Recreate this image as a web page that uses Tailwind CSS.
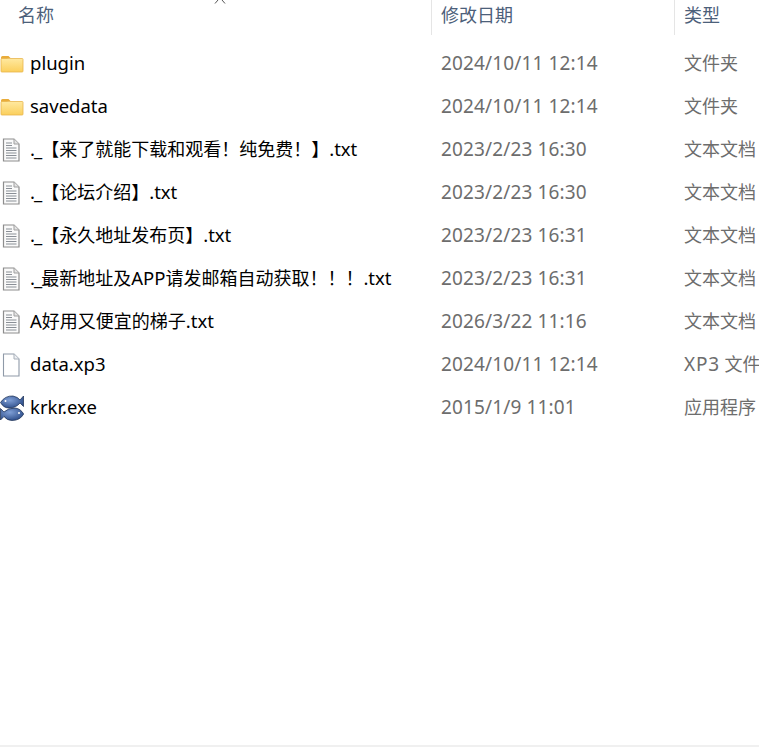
<!DOCTYPE html>
<html lang="zh-CN">
<head>
<meta charset="UTF-8">
<title>文件列表</title>
<script src="https://cdn.jsdelivr.net/npm/@tailwindcss/browser@4"></script>
</head>
<body class="bg-white">
<div class="relative w-[759px] h-[747px] overflow-hidden font-['Noto_Sans','Noto_Sans_CJK_SC',sans-serif] text-[18.5px] leading-[43px]">
  <svg width="0" height="0" class="absolute">
    <defs>
      <linearGradient id="fold" x1="0" y1="0" x2="0" y2="1"><stop offset="0" stop-color="#ffe9a0"/><stop offset="1" stop-color="#fbcf5c"/></linearGradient>
      <radialGradient id="fish" cx="0.4" cy="0.35" r="0.8"><stop offset="0" stop-color="#7f9fd6"/><stop offset="1" stop-color="#1f3f7c"/></radialGradient>
      <symbol id="folder" viewBox="0 0 24 18">
        <path d="M1 2.500Q1 1 2.500 1H8.500L10.500 3H8L6.500 4.500H1Z" fill="#e9ac3a"/>
        <rect x="1" y="3.500" width="22" height="13.500" rx="0.800" fill="url(#fold)" stroke="#e8b54d" stroke-width="0.800"/>
      </symbol>
      <symbol id="txt" viewBox="0 0 20 24">
        <path d="M2.500 1H13L18 6V23H2.500Z" fill="#fafafa" stroke="#8d8d8d" stroke-width="1.200"/>
        <path d="M13 1V6H18" fill="#e4e4e4" stroke="#a0a0a0" stroke-width="1"/>
        <path d="M5 5H11M5 7.500H11M5 10H15.500M5 12.500H15.500M5 15H15.500M5 17.500H15.500M5 20H15.500" stroke="#8a8f96" stroke-width="1.100"/>
      </symbol>
      <symbol id="blank" viewBox="0 0 20 24">
        <path d="M2.500 1H13L18 6V23H2.500Z" fill="#fff" stroke="#8f9aa8" stroke-width="1.100"/>
        <path d="M13 1V6H18" fill="#eef0f3" stroke="#a8b0ba" stroke-width="1"/>
      </symbol>
      <symbol id="krkr" viewBox="0 0 24 26">
        <path d="M0.500 7.500Q5 0.500 13 1Q18 2 20 5L23.500 1V11.500L20 8Q16 13 9 13Q3.500 13 0.500 7.500Z" fill="url(#fish)" stroke="#15294f" stroke-width="0.700"/>
        <path d="M0.500 13.500L4 17Q8 13 15 13Q20.500 13.500 23.700 19Q20 25.500 12 25.500Q7 25.500 4 21.500L0.500 25Z" fill="url(#fish)" stroke="#15294f" stroke-width="0.700"/>
        <circle cx="5.500" cy="6" r="1" fill="#fff"/><circle cx="19" cy="18" r="1" fill="#fff"/>
      </symbol>
    </defs>
  </svg>

  <!-- Bit of the window title cut off at the top -->
  <svg class="absolute left-[214px] top-0 w-3 h-1" viewBox="0 0 12 4" fill="none" stroke="#555" stroke-width="1"><path d="M4 0L1 3.500M8 0L11 3.500"/></svg>

  <!-- Header -->
  <div class="grid grid-cols-[431px_243px_85px] h-[35px] text-[#4c607a] text-[18px] leading-[31px]">
    <div class="pl-[18px]">名称</div>
    <div class="border-l border-[#e5e5e5] pl-[9px]">修改日期</div>
    <div class="border-l border-[#e5e5e5] pl-[9px]">类型</div>
  </div>

  <!-- Files -->
  <div class="pt-[7px]">
    <div class="grid grid-cols-[441px_243px_75px] h-[43px] whitespace-nowrap">
      <div class="flex items-center text-black"><svg class="w-6 h-[18px] shrink-0"><use href="#folder"/></svg><span class="ml-[6px] -translate-y-px">plugin</span></div>
      <div class="text-[#6d6d6d] text-[19px] tracking-[0.13px]">2024/10/11 12:14</div><div class="text-[#6d6d6d] text-[18px]">文件夹</div>
    </div>
    <div class="grid grid-cols-[441px_243px_75px] h-[43px] whitespace-nowrap">
      <div class="flex items-center text-black"><svg class="w-6 h-[18px] shrink-0"><use href="#folder"/></svg><span class="ml-[6px] -translate-y-px">savedata</span></div>
      <div class="text-[#6d6d6d] text-[19px] tracking-[0.13px]">2024/10/11 12:14</div><div class="text-[#6d6d6d] text-[18px]">文件夹</div>
    </div>
    <div class="grid grid-cols-[441px_243px_75px] h-[43px] whitespace-nowrap">
      <div class="flex items-center text-black"><svg class="w-5 h-6 ml-[1px] shrink-0"><use href="#txt"/></svg><span class="ml-[9px] -translate-y-px"><span class="tracking-[-1px]">._</span><span class="text-[18px]">【来了就能下载和观看！纯免费！】</span>.txt</span></div>
      <div class="text-[#6d6d6d] text-[19px] tracking-[0.13px]">2023/2/23 16:30</div><div class="text-[#6d6d6d] text-[18px]">文本文档</div>
    </div>
    <div class="grid grid-cols-[441px_243px_75px] h-[43px] whitespace-nowrap">
      <div class="flex items-center text-black"><svg class="w-5 h-6 ml-[1px] shrink-0"><use href="#txt"/></svg><span class="ml-[9px] -translate-y-px"><span class="tracking-[-1px]">._</span><span class="text-[18px]">【论坛介绍】</span>.txt</span></div>
      <div class="text-[#6d6d6d] text-[19px] tracking-[0.13px]">2023/2/23 16:30</div><div class="text-[#6d6d6d] text-[18px]">文本文档</div>
    </div>
    <div class="grid grid-cols-[441px_243px_75px] h-[43px] whitespace-nowrap">
      <div class="flex items-center text-black"><svg class="w-5 h-6 ml-[1px] shrink-0"><use href="#txt"/></svg><span class="ml-[9px] -translate-y-px"><span class="tracking-[-1px]">._</span><span class="text-[18px]">【永久地址发布页】</span>.txt</span></div>
      <div class="text-[#6d6d6d] text-[19px] tracking-[0.13px]">2023/2/23 16:31</div><div class="text-[#6d6d6d] text-[18px]">文本文档</div>
    </div>
    <div class="grid grid-cols-[441px_243px_75px] h-[43px] whitespace-nowrap">
      <div class="flex items-center text-black"><svg class="w-5 h-6 ml-[1px] shrink-0"><use href="#txt"/></svg><span class="ml-[9px] -translate-y-px"><span class="tracking-[-1px]">._</span><span class="text-[18px]">最新地址及</span>APP<span class="text-[18px]">请发邮箱自动获取！！！</span>.txt</span></div>
      <div class="text-[#6d6d6d] text-[19px] tracking-[0.13px]">2023/2/23 16:31</div><div class="text-[#6d6d6d] text-[18px]">文本文档</div>
    </div>
    <div class="grid grid-cols-[441px_243px_75px] h-[43px] whitespace-nowrap">
      <div class="flex items-center text-black"><svg class="w-5 h-6 ml-[1px] shrink-0"><use href="#txt"/></svg><span class="ml-[9px] -translate-y-px">A<span class="text-[18px]">好用又便宜的梯子</span>.txt</span></div>
      <div class="text-[#6d6d6d] text-[19px] tracking-[0.13px]">2026/3/22 11:16</div><div class="text-[#6d6d6d] text-[18px]">文本文档</div>
    </div>
    <div class="grid grid-cols-[441px_243px_75px] h-[43px] whitespace-nowrap">
      <div class="flex items-center text-black"><svg class="w-5 h-6 ml-[1px] shrink-0"><use href="#blank"/></svg><span class="ml-[9px] -translate-y-px">data.xp3</span></div>
      <div class="text-[#6d6d6d] text-[19px] tracking-[0.13px]">2024/10/11 12:14</div><div class="text-[#6d6d6d] text-[18px]"><span class="text-[19px] tracking-[0.8px]">XP3</span> 文件</div>
    </div>
    <div class="grid grid-cols-[441px_243px_75px] h-[43px] whitespace-nowrap">
      <div class="flex items-center text-black"><svg class="w-6 h-[26px] shrink-0"><use href="#krkr"/></svg><span class="ml-[6px] -translate-y-px">krkr.exe</span></div>
      <div class="text-[#6d6d6d] text-[19px] tracking-[0.13px]">2015/1/9 11:01</div><div class="text-[#6d6d6d] text-[18px]">应用程序</div>
    </div>
  </div>

  <!-- Bottom edge of the window -->
  <div class="absolute left-0 right-0 bottom-0 h-[2px] bg-[#f0f0f0]"></div>
</div>
</body>
</html>
